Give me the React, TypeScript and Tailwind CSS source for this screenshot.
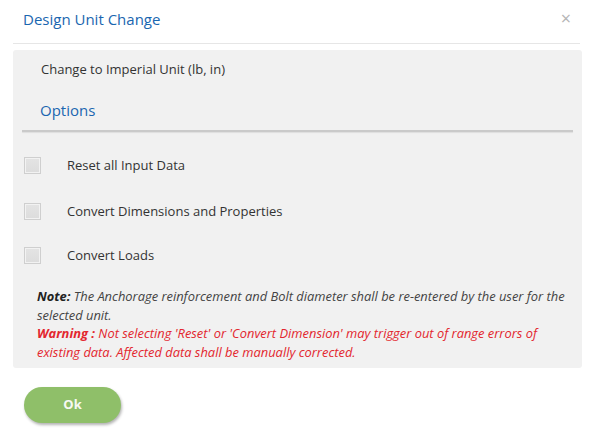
import React from "react";

function Row({ label, top }: { label: string; top: string }) {
  return (
    <div className={`flex items-center ${top}`}>
      <div className="ml-[11px] w-[17px] h-[17px] border border-[#cfcfcf] bg-gradient-to-b from-[#e4e4e4] to-[#dcdcdc] shadow-[inset_0_0_0_1px_#f2f2f2]" />
      <span className="ml-[26px] text-[13px] leading-[18px] text-[#333]">{label}</span>
    </div>
  );
}

export default function App() {
  return (
    <div
      className="w-[593px] h-[440px] bg-white px-[13px] overflow-hidden"
      style={{ fontFamily: '"Open Sans", "Noto Sans", Arial, sans-serif' }}
    >
      <div className="h-[44px] border-b border-[#e6e6e6] flex items-center justify-between pl-[10px] pr-[9px]">
        <span className="text-[15px] leading-[20px] text-[#1a66b0] -mt-[6px]">Design Unit Change</span>
        <span className="text-[18px] leading-[20px] text-[#b5b5b5] -mt-[7px]">×</span>
      </div>
      <div className="mt-[6px] w-[569px] h-[318px] bg-[#f1f1f1] rounded-[3px] flex flex-col">
        <div className="pl-[28px] pt-[10px] text-[13px] leading-[18px] text-[#333]">
          Change to Imperial Unit (lb, in)
        </div>
        <div className="pl-[27px] mt-[22px] text-[15px] leading-[20px] text-[#1a66b0]">Options</div>
        <div className="mx-[9px] mt-[10px] h-[2px] bg-[#cacaca] shadow-[0_1px_1px_rgba(0,0,0,0.08)]" />
        <Row label="Reset all Input Data" top="mt-[24px]" />
        <Row label="Convert Dimensions and Properties" top="mt-[28px]" />
        <Row label="Convert Loads" top="mt-[26px]" />
        <div className="pl-[24px] pr-[12px] mt-[23px] text-[12.9px] leading-[18.7px] italic">
          <p className="text-[#444]">
            <b className="font-bold text-[#222]">Note:</b> The Anchorage reinforcement and Bolt diameter shall be re-entered by the user for the selected unit.
          </p>
          <p className="text-[#e3262e]">
            <b className="font-bold">Warning :</b> Not selecting 'Reset' or 'Convert Dimension' may trigger out of range errors of existing data. Affected data shall be manually corrected.
          </p>
        </div>
      </div>
      <div className="mt-[19px] ml-[11px] w-[97px] h-[36px] rounded-full bg-[#8fbf69] shadow-[1px_2px_3px_rgba(0,0,0,0.3)] flex items-center justify-center">
        <span className="text-[13px] font-bold text-[#f7f9f3]">Ok</span>
      </div>
    </div>
  );
}
